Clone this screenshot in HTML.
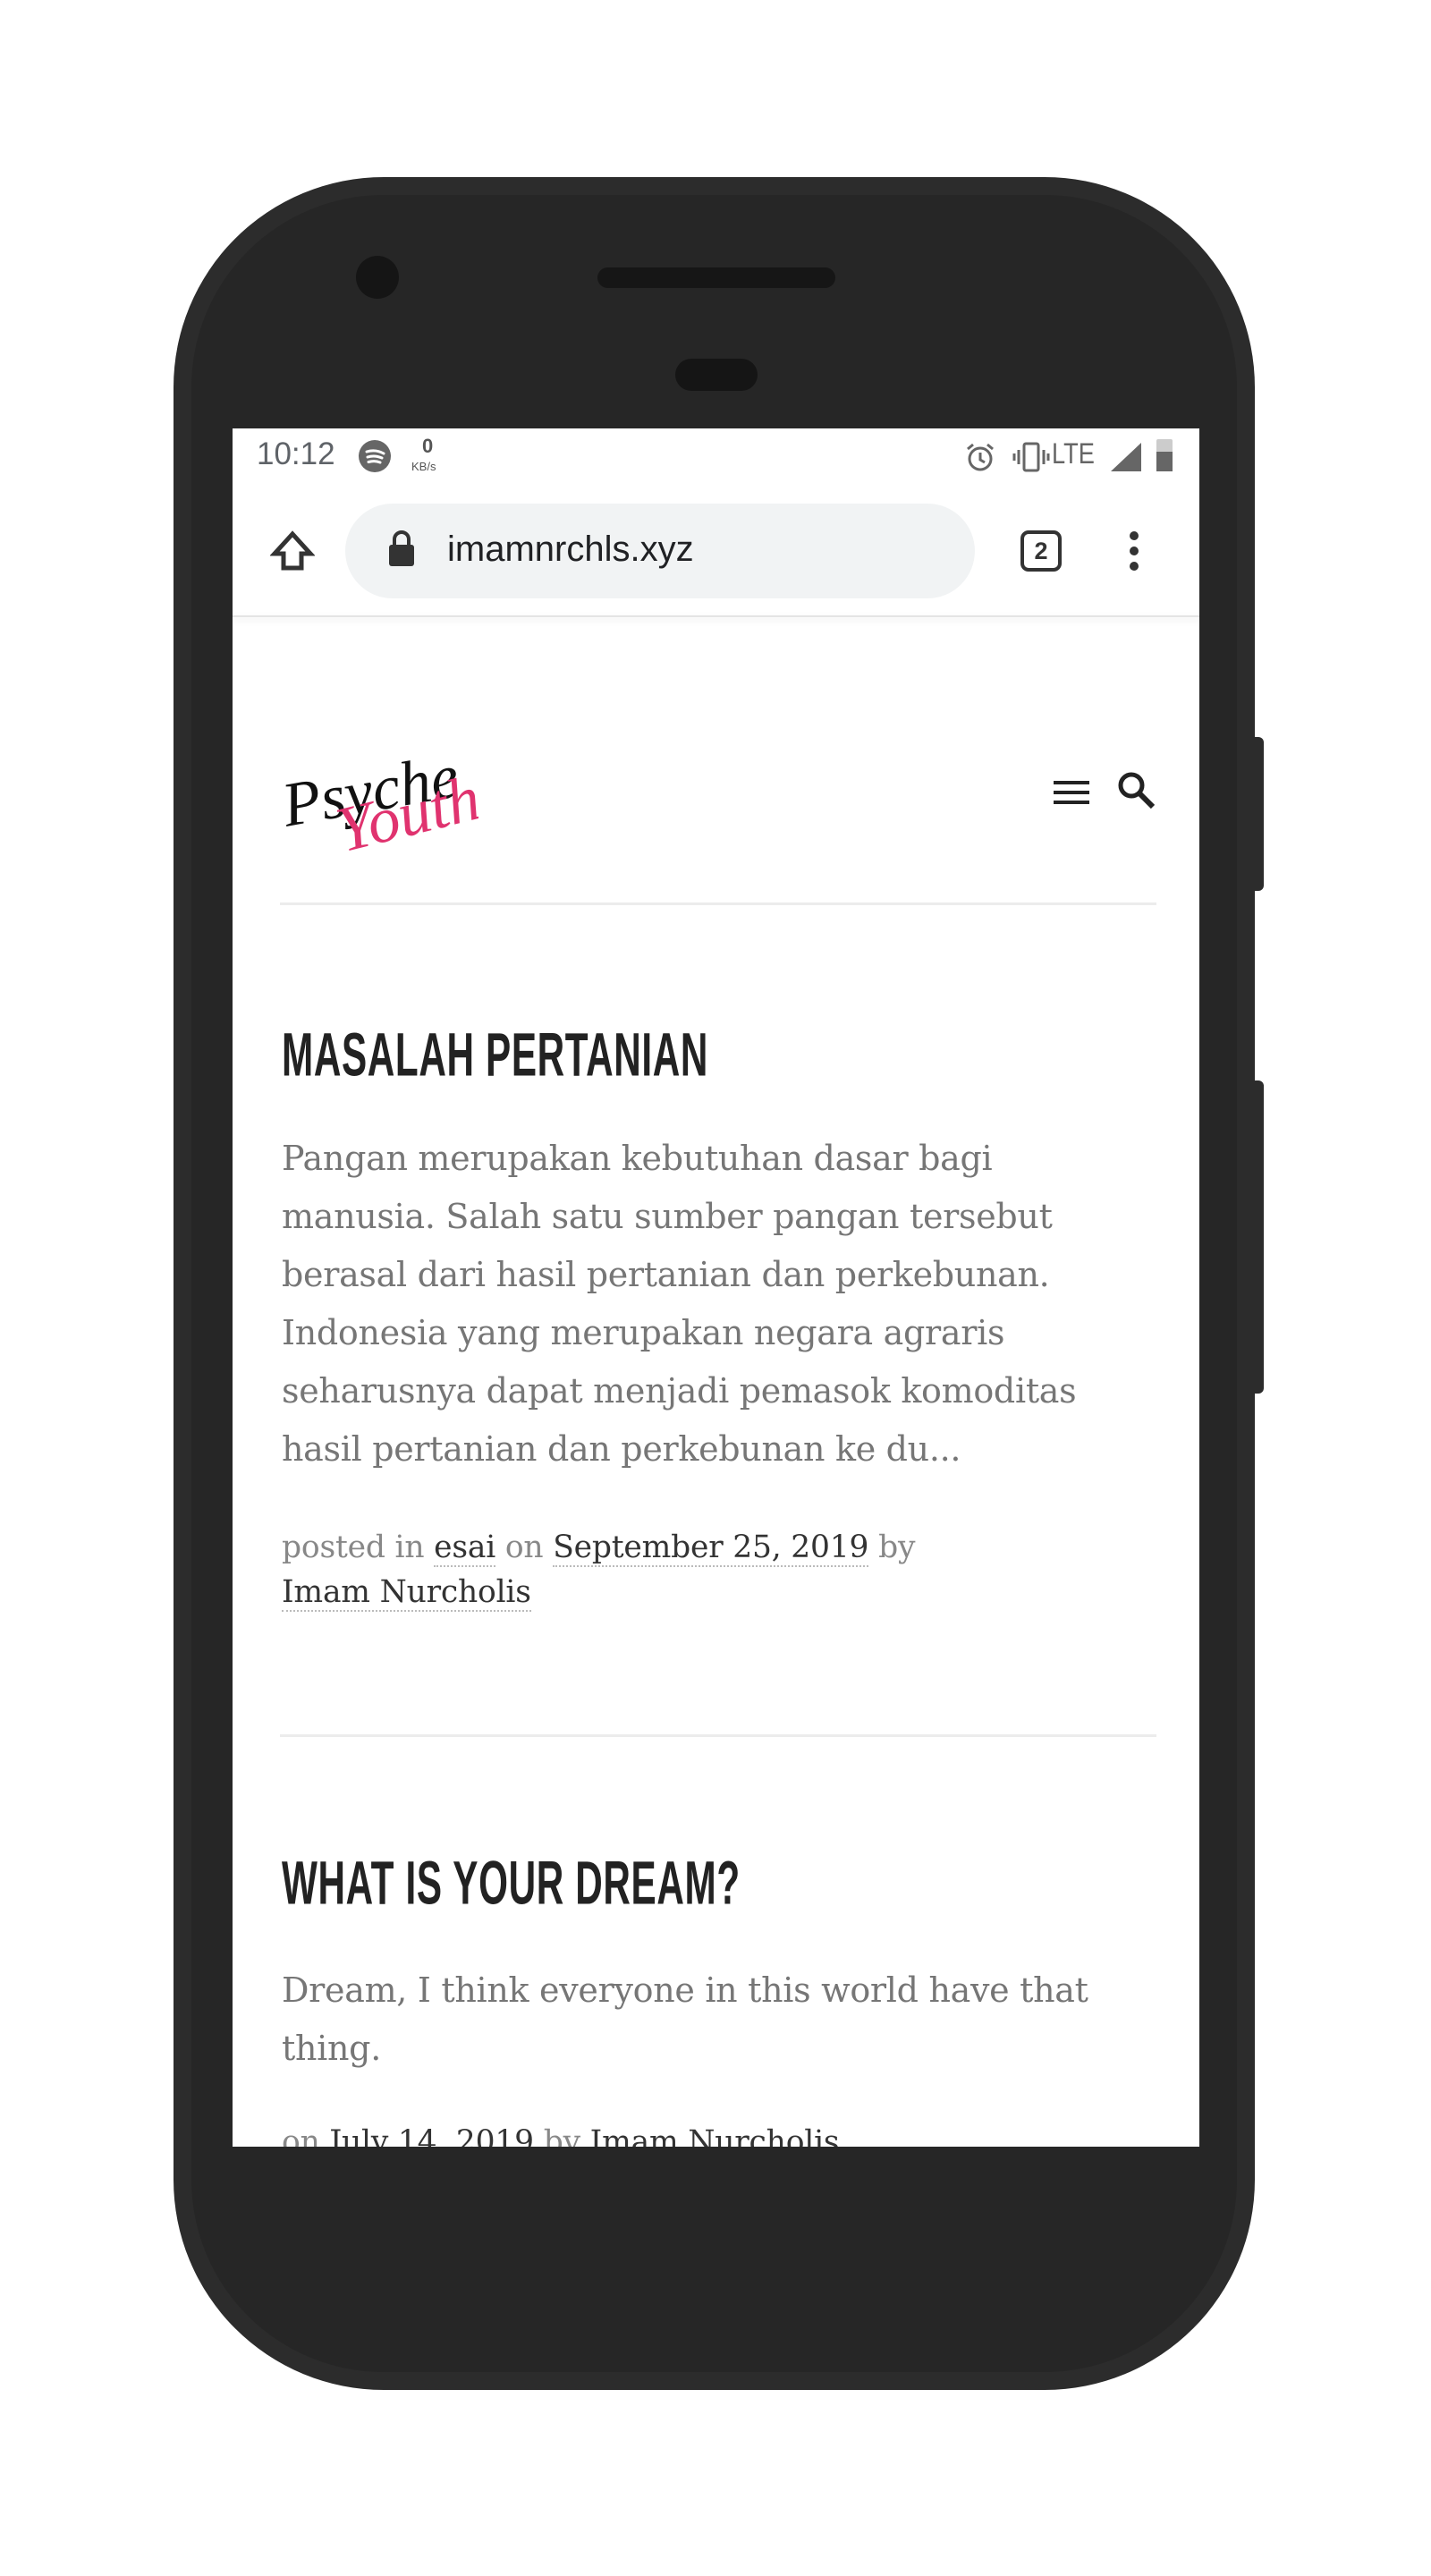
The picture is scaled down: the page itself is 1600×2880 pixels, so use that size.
<!DOCTYPE html>
<html><head><meta charset="utf-8"><style>
*{margin:0;padding:0;box-sizing:border-box}
body{width:1600px;height:2880px;background:#fff;position:relative;overflow:hidden;font-family:"Liberation Sans",sans-serif}
.abs{position:absolute}
.phone{left:194px;top:198px;width:1209px;height:2474px;background:#2c2c2c;border-radius:235px}
.phone2{left:214px;top:218px;width:1169px;height:2434px;background:#262626;border-radius:215px}
.screen{left:260px;top:479px;width:1081px;height:1921px;background:#fff;overflow:hidden}
.serif{font-family:"DejaVu Serif","Liberation Serif",serif}
.title{font-family:"Liberation Sans Narrow","Liberation Sans",sans-serif;font-weight:bold;font-size:66px;color:#222;transform:scale(0.64,1.04);transform-origin:0 0;letter-spacing:1px;white-space:nowrap}
.body{color:#767676;font-size:38px;line-height:65px;letter-spacing:-0.3px}
.meta{color:#888;font-size:34.5px;line-height:50px;letter-spacing:-0.2px}
.meta a{color:#333;text-decoration:none;border-bottom:2px dotted #bbb}
</style></head><body>
<div class="abs phone"></div>
<div class="abs phone2"></div>
<div class="abs" style="left:1401px;top:824px;width:12px;height:172px;background:#2c2c2c;border-radius:0 6px 6px 0"></div>
<div class="abs" style="left:1401px;top:1208px;width:12px;height:350px;background:#2c2c2c;border-radius:0 6px 6px 0"></div>
<div class="abs" style="left:398px;top:286px;width:48px;height:48px;background:#151515;border-radius:50%"></div>
<div class="abs" style="left:668px;top:299px;width:266px;height:23px;background:#161616;border-radius:12px"></div>
<div class="abs" style="left:755px;top:401px;width:92px;height:36px;background:#151515;border-radius:18px"></div>

<div class="abs screen">
  <div class="abs" style="left:27px;top:9px;font-size:35px;color:#5f6368">10:12</div>
  <div class="abs" style="left:141px;top:13px;width:36px;height:36px;border-radius:50%;background:#666"></div>
  <svg class="abs" style="left:141px;top:13px" width="36" height="36" viewBox="0 0 36 36"><path d="M9 13 Q19 10 28 15 M10 19 Q18 16.5 26 20 M11 24.5 Q18 22.5 24 25" stroke="#fff" stroke-width="3" fill="none" stroke-linecap="round"/></svg>
  <div class="abs" style="left:212px;top:7px;font-size:22px;color:#555;font-weight:bold">0</div>
  <div class="abs" style="left:200px;top:35px;font-size:13px;color:#555">KB/s</div>
  <svg class="abs" style="left:818px;top:15px" width="36" height="36" viewBox="0 0 36 36"><circle cx="18" cy="19" r="12" stroke="#666" stroke-width="3" fill="none"/><path d="M18 12v8l5 3M4 8l6-5M32 8l-6-5" stroke="#666" stroke-width="3" fill="none"/></svg>
  <svg class="abs" style="left:872px;top:14px" width="42" height="36" viewBox="0 0 42 36"><rect x="13" y="3" width="16" height="30" rx="2" stroke="#666" stroke-width="3" fill="none"/><path d="M7 10v16M2 14v8M35 10v16M40 14v8" stroke="#666" stroke-width="3"/></svg>
  <div class="abs" style="left:916px;top:10px;font-size:32px;color:#666;transform:scaleX(.85);transform-origin:0 0">LTE</div>
  <svg class="abs" style="left:982px;top:16px" width="34" height="32"><path d="M0 32L34 0V32Z" fill="#666"/></svg>
  <div class="abs" style="left:1033px;top:12px;width:18px;height:36px;background:#ccc;border-radius:2px"></div>
  <div class="abs" style="left:1033px;top:26px;width:18px;height:22px;background:#666"></div>
  <svg class="abs" style="left:42px;top:114px" width="50" height="46" viewBox="0 0 50 46"><path d="M25 4L5 26h10v16h20V26h10z" stroke="#333" stroke-width="5" fill="none"/></svg>
  <div class="abs" style="left:126px;top:84px;width:704px;height:106px;background:#f1f3f4;border-radius:53px"></div>
  <svg class="abs" style="left:172px;top:112px" width="34" height="44" viewBox="0 0 34 44"><path d="M9 18V12a8 8 0 0 1 16 0v6" stroke="#333" stroke-width="4" fill="none"/><rect x="3" y="18" width="28" height="24" rx="3" fill="#333"/></svg>
  <div class="abs" style="left:240px;top:113px;font-size:40px;color:#202124">imamnrchls.xyz</div>
  <div class="abs" style="left:881px;top:114px;width:46px;height:46px;border:4px solid #333;border-radius:9px;font-size:27px;font-weight:bold;text-align:center;line-height:38px;color:#333">2</div>
  <div class="abs" style="left:1003px;top:115px;width:10px;height:10px;border-radius:50%;background:#333"></div>
  <div class="abs" style="left:1003px;top:132px;width:10px;height:10px;border-radius:50%;background:#333"></div>
  <div class="abs" style="left:1003px;top:149px;width:10px;height:10px;border-radius:50%;background:#333"></div>
  <div class="abs" style="left:0;top:209px;width:1083px;height:2px;background:#e4e4e4;box-shadow:0 3px 8px rgba(0,0,0,.12)"></div>
  <svg class="abs" style="left:55px;top:350px" width="220" height="130" viewBox="0 0 220 130">
    <text x="2" y="85" font-family="Liberation Serif,serif" font-style="italic" font-size="70" fill="#111" transform="rotate(-10 60 70)">Psyche</text>
    <text x="60" y="110" font-family="Liberation Serif,serif" font-style="italic" font-size="72" fill="#e0336f" transform="rotate(-14 120 80)">Youth!</text>
  </svg>
  <div class="abs" style="left:918px;top:394px;width:40px;height:4px;background:#222"></div>
  <div class="abs" style="left:918px;top:405px;width:40px;height:4px;background:#222"></div>
  <div class="abs" style="left:918px;top:416px;width:40px;height:4px;background:#222"></div>
  <svg class="abs" style="left:988px;top:382px" width="46" height="46" viewBox="0 0 46 46"><circle cx="17" cy="17" r="12" stroke="#222" stroke-width="5" fill="none"/><path d="M26 26L41 41" stroke="#222" stroke-width="6"/></svg>
  <div class="abs" style="left:53px;top:530px;width:980px;height:3px;background:#ececec"></div>

  <div class="abs title" style="left:55px;top:660px">MASALAH PERTANIAN</div>
  <div class="abs serif body" style="left:55px;top:784px;width:1010px">Pangan merupakan kebutuhan dasar bagi<br>manusia. Salah satu sumber pangan tersebut<br>berasal dari hasil pertanian dan perkebunan.<br>Indonesia yang merupakan negara agraris<br>seharusnya dapat menjadi pemasok komoditas<br>hasil pertanian dan perkebunan ke du...</div>
  <div class="abs serif meta" style="left:55px;top:1226px;width:1010px">posted in <a>esai</a> on <a>September 25, 2019</a> by<br><a>Imam Nurcholis</a></div>
  <div class="abs" style="left:53px;top:1460px;width:980px;height:3px;background:#ececec"></div>

  <div class="abs title" style="left:55px;top:1586px">WHAT IS YOUR DREAM?</div>
  <div class="abs serif body" style="left:55px;top:1714px;width:1010px">Dream, I think everyone in this world have that<br>thing.</div>
  <div class="abs serif meta" style="left:55px;top:1891px;width:1010px">on <a>July 14, 2019</a> by <a>Imam Nurcholis</a></div>
</div>
</body></html>
